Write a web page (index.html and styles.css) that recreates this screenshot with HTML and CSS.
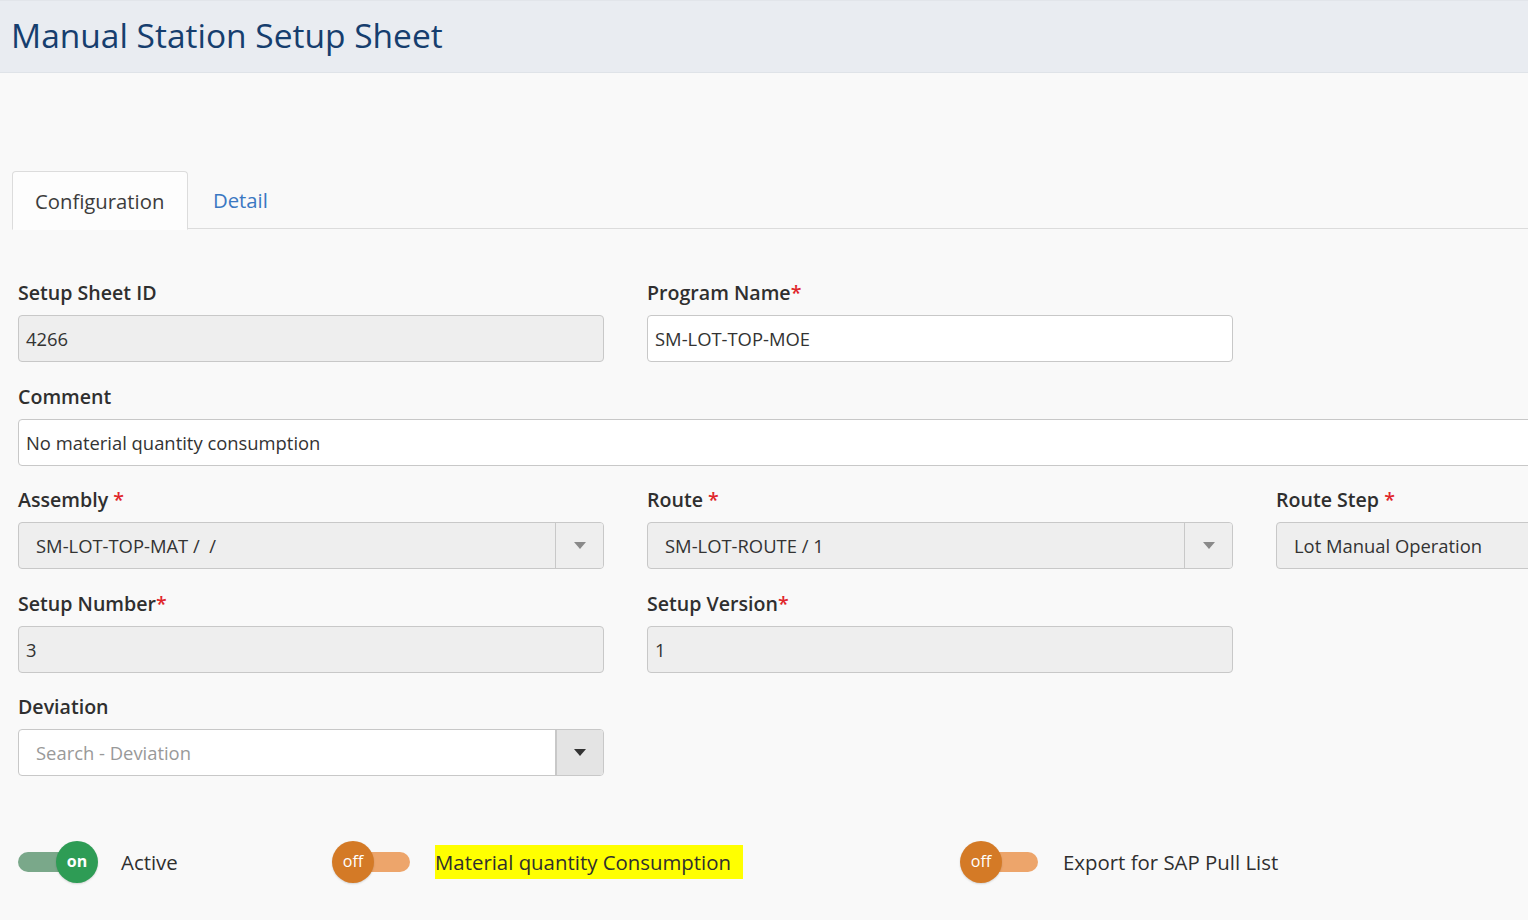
FILE: index.html
```html
<!DOCTYPE html>
<html>
<head>
<meta charset="utf-8">
<title>Manual Station Setup Sheet</title>
<link rel="stylesheet" href="styles.css">
</head>
<body>
<header class="page-header">
  <h1 class="page-title">Manual Station Setup Sheet</h1>
</header>
<main class="content">
  <nav class="tabs">
    <div class="tab tab-active">Configuration</div>
    <div class="tab">Detail</div>
  </nav>
  <form class="form-grid">
    <div class="field">
      <label class="field-label">Setup Sheet ID</label>
      <div class="input disabled">4266</div>
    </div>
    <div class="field">
      <label class="field-label">Program Name<span class="req">*</span></label>
      <div class="input">SM-LOT-TOP-MOE</div>
    </div>
    <div class="field empty"></div>

    <div class="field span-all">
      <label class="field-label">Comment</label>
      <div class="input">No material quantity consumption</div>
    </div>

    <div class="field">
      <label class="field-label">Assembly <span class="req">*</span></label>
      <div class="select disabled">
        <span class="select-text">SM-LOT-TOP-MAT /&nbsp; /</span>
        <span class="select-btn"><span class="caret light"></span></span>
      </div>
    </div>
    <div class="field">
      <label class="field-label">Route <span class="req">*</span></label>
      <div class="select disabled">
        <span class="select-text">SM-LOT-ROUTE / 1</span>
        <span class="select-btn"><span class="caret light"></span></span>
      </div>
    </div>
    <div class="field">
      <label class="field-label">Route Step <span class="req">*</span></label>
      <div class="select disabled">
        <span class="select-text">Lot Manual Operation</span>
      </div>
    </div>

    <div class="field">
      <label class="field-label">Setup Number<span class="req">*</span></label>
      <div class="input disabled">3</div>
    </div>
    <div class="field">
      <label class="field-label">Setup Version<span class="req">*</span></label>
      <div class="input disabled">1</div>
    </div>
    <div class="field empty"></div>

    <div class="field">
      <label class="field-label">Deviation</label>
      <div class="select">
        <span class="select-text placeholder">Search - Deviation</span>
        <span class="select-btn dark"><span class="caret"></span></span>
      </div>
    </div>
  </form>

  <div class="toggles">
    <div class="toggle-item w1">
      <span class="switch on"><span class="track"></span><span class="knob">on</span></span>
      <span class="toggle-label">Active</span>
    </div>
    <div class="toggle-item w2">
      <span class="switch off"><span class="track"></span><span class="knob">off</span></span>
      <span class="toggle-label"><span class="highlight">Material quantity Consumption</span></span>
    </div>
    <div class="toggle-item">
      <span class="switch off"><span class="track"></span><span class="knob">off</span></span>
      <span class="toggle-label">Export for SAP Pull List</span>
    </div>
  </div>
</main>
</body>
</html>
```
FILE: styles.css
```css
* { box-sizing: border-box; }
html, body {
  margin: 0;
  padding: 0;
  background: #f9f9f9;
  font-family: "Open Sans", "Liberation Sans", sans-serif;
  color: #333;
  overflow: hidden;
}
body { width: 1528px; height: 920px; }

.page-header {
  background: #e9ecf1;
  height: 73px;
  border-bottom: 1px solid #dfe3e8;
  border-top: 1px solid #e2e5ea;
  padding-left: 11px;
  display: flex;
  align-items: center;
  width: 1700px;
}
.page-title {
  margin: 0;
  font-weight: 400;
  font-size: 33.5px;
  color: #163e6e;
  position: relative;
  top: -2px;
}

.content {
  padding: 98px 0 0 12px;
  width: 1900px;
}

.tabs {
  display: flex;
  border-bottom: 1px solid #dcdcdc;
  height: 58px;
}
.tab {
  height: 58px;
  padding: 0 22px;
  display: flex;
  align-items: center;
  font-size: 20.3px;
  font-weight: 500;
  color: #3a78c2;
}
.tab-active {
  background: #fdfdfd;
  border: 1px solid #dcdcdc;
  border-bottom: 1px solid #fdfdfd;
  border-radius: 4px 4px 0 0;
  color: #3c3c3c;
  height: 59px;
  margin-bottom: -1px;
  width: 176px;
}
.tab + .tab { padding-left: 25px; }

.form-grid {
  display: grid;
  grid-template-columns: 586px 586px 586px;
  column-gap: 43px;
  row-gap: 22.5px;
  padding: 52px 0 0 6px;
}
.span-all { grid-column: 1 / 4; }
.field { display: flex; flex-direction: column; }
.field-label {
  font-size: 19.6px;
  font-weight: 600;
  color: #2f2f2f;
  line-height: 24px;
  height: 24px;
  margin-bottom: 10px;
}
.req { color: #e0262b; }

.input, .select {
  height: 47px;
  border: 1px solid #c8c8c8;
  border-radius: 4px;
  background: #fff;
  font-size: 18.4px;
  color: #333;
  display: flex;
  align-items: center;
}
.input { padding-left: 7px; }
.disabled { background: #eeeeee; }
.select { overflow: hidden; }
.select-text { flex: 1; padding-left: 17px; }
.placeholder { color: #999; }
.select-btn {
  width: 48px;
  height: 100%;
  border-left: 1px solid #c8c8c8;
  background: #eeeeee;
  display: flex;
  align-items: center;
  justify-content: center;
}
.select-btn.dark { background: #e4e4e4; border-left: 2px solid #c8c8c8; }
.caret {
  width: 0; height: 0;
  border-left: 6px solid transparent;
  border-right: 6px solid transparent;
  border-top: 7px solid #333;
}
.caret.light { border-top-color: #8a8a8a; }

.toggles {
  display: flex;
  align-items: center;
  padding: 64px 0 0 6px;
}
.toggle-item {
  display: flex;
  align-items: center;
  gap: 23px;
}
.toggle-item.w1 { width: 314px; }
.toggle-item.w2 { width: 628px; }
.switch {
  position: relative;
  width: 80px;
  height: 44px;
  display: inline-block;
}
.switch .track {
  position: absolute;
  left: 0; right: 0;
  top: 12px;
  height: 20px;
  border-radius: 10px;
}
.switch .knob {
  position: absolute;
  top: 1px;
  width: 42px;
  height: 42px;
  border-radius: 50%;
  color: #fff;
  font-size: 16px;
  display: flex;
  align-items: center;
  justify-content: center;
  padding-bottom: 3px;
  box-shadow: 0 1px 2px rgba(0,0,0,0.15);
}
.switch.on .track { background: #7aa88a; right: 4px; }
.switch.on .knob { right: 0; background: #2e9c55; font-weight: 700; }
.switch.off .track { background: #eda56b; left: 4px; right: 2px; }
.switch.off .knob { left: 0; background: #d47a26; font-weight: 400; }
.toggle-label {
  font-size: 20.4px;
  font-weight: 500;
  color: #2f2f2f;
}
.highlight {
  background: #ffff00;
  padding: 3px 12px 3px 0;
}
```
